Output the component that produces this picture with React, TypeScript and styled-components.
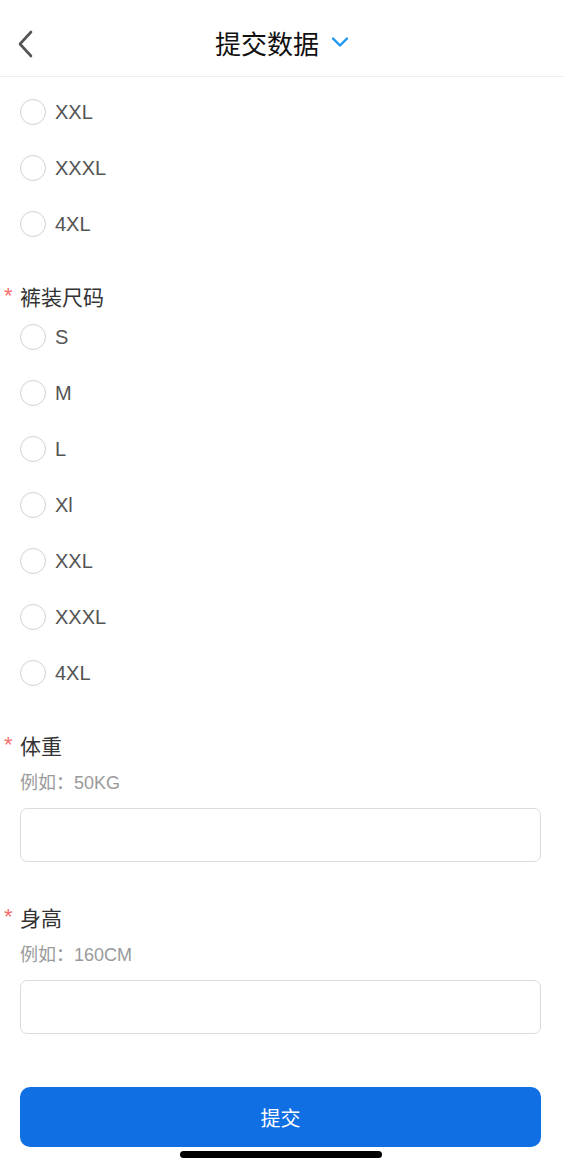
import React, { useState } from 'react';
import styled, { createGlobalStyle } from 'styled-components';

const GlobalStyle = createGlobalStyle`
  html, body {
    margin: 0;
    padding: 0;
    background: #fff;
    font-family: "Liberation Sans", "Noto Sans CJK SC", sans-serif;
  }
  * { box-sizing: border-box; }
`;

const Page = styled.div`
  width: 564px;
  min-height: 1170px;
  background: #fff;
  position: relative;
`;

const Header = styled.div`
  height: 77px;
  border-bottom: 1px solid #efefef;
  display: flex;
  align-items: center;
  justify-content: center;
  position: relative;
`;

const BackBtn = styled.div`
  position: absolute;
  left: 16px;
  top: 29px;
  width: 22px;
  height: 30px;
  display: flex;
  align-items: center;
`;

const Title = styled.div`
  display: flex;
  align-items: center;
  gap: 12px;
  font-size: 26px;
  color: #111;
  margin-top: 8px;
  font-family: "Noto Sans CJK SC", sans-serif;
`;

const Body = styled.div`
  padding: 7px 20px 0 20px;
`;

const Field = styled.div<{ $gap?: number }>`
  display: flex;
  flex-direction: column;
  margin-top: ${p => p.$gap ?? 0}px;
`;

const Label = styled.div`
  position: relative;
  font-size: 21px;
  line-height: 26px;
  color: #333;
  font-family: "Noto Sans CJK SC", sans-serif;

  .star {
    position: absolute;
    left: -16px;
    top: 0px;
    color: #f56c6c;
    font-size: 22px;
    font-family: "Liberation Sans", sans-serif;
  }
`;

const Row = styled.div`
  height: 56px;
  display: flex;
  align-items: center;
  gap: 9px;
  cursor: pointer;
`;

const Circle = styled.div<{ $on?: boolean }>`
  width: 26px;
  height: 26px;
  border-radius: 50%;
  border: 1px solid ${p => (p.$on ? '#116fe4' : '#d2d2d2')};
  background: ${p => (p.$on ? '#116fe4' : '#fff')};
`;

const OptText = styled.span`
  font-size: 20px;
  color: #555;
`;

const Hint = styled.div`
  margin-top: 15px;
  font-size: 18px;
  line-height: 20px;
  color: #9a9a9a;
`;

const Input = styled.input`
  margin-top: 15px;
  width: 521px;
  height: 54px;
  border: 1.5px solid #dcdcdc;
  border-radius: 7px;
  outline: none;
  padding: 0 12px;
  font-size: 18px;
`;

const Submit = styled.button`
  margin-top: 53px;
  width: 521px;
  height: 60px;
  border: none;
  border-radius: 10px;
  background: #116fe4;
  color: #fff;
  font-size: 20px;
  font-family: "Noto Sans CJK SC", sans-serif;
`;

const HomeBar = styled.div`
  position: absolute;
  left: 180px;
  top: 1151px;
  width: 202px;
  height: 7px;
  border-radius: 4px;
  background: #000;
`;

const upper = ['XXL', 'XXXL', '4XL'];
const pants = ['S', 'M', 'L', 'Xl', 'XXL', 'XXXL', '4XL'];

function Radios({ items, value, onPick }: { items: string[]; value: string; onPick: (v: string) => void }) {
  return (
    <>
      {items.map(it => (
        <Row key={it} onClick={() => onPick(it)}>
          <Circle $on={value === it} />
          <OptText>{it}</OptText>
        </Row>
      ))}
    </>
  );
}

export default function App() {
  const [top, setTop] = useState('');
  const [pant, setPant] = useState('');

  return (
    <Page>
      <GlobalStyle />
      <Header>
        <BackBtn>
          <svg width="18" height="28" viewBox="0 0 18 28">
            <path d="M15 2 L4 14 L15 26" fill="none" stroke="#555" strokeWidth="2.6" strokeLinecap="round" strokeLinejoin="round" />
          </svg>
        </BackBtn>
        <Title>
          <span>提交数据</span>
          <svg width="18" height="12" viewBox="0 0 18 12">
            <path d="M2 2.5 L9 9.5 L16 2.5" fill="none" stroke="#1b96f3" strokeWidth="2.4" strokeLinecap="round" strokeLinejoin="round" />
          </svg>
        </Title>
      </Header>
      <Body>
        <Field>
          <Radios items={upper} value={top} onPick={setTop} />
        </Field>
        <Field $gap={31}>
          <Label><span className="star">*</span>裤装尺码</Label>
          <Radios items={pants} value={pant} onPick={setPant} />
        </Field>
        <Field $gap={31}>
          <Label><span className="star">*</span>体重</Label>
          <Hint>例如：50KG</Hint>
          <Input />
        </Field>
        <Field $gap={42}>
          <Label><span className="star">*</span>身高</Label>
          <Hint>例如：160CM</Hint>
          <Input />
        </Field>
        <Submit>提交</Submit>
      </Body>
      <HomeBar />
    </Page>
  );
}
